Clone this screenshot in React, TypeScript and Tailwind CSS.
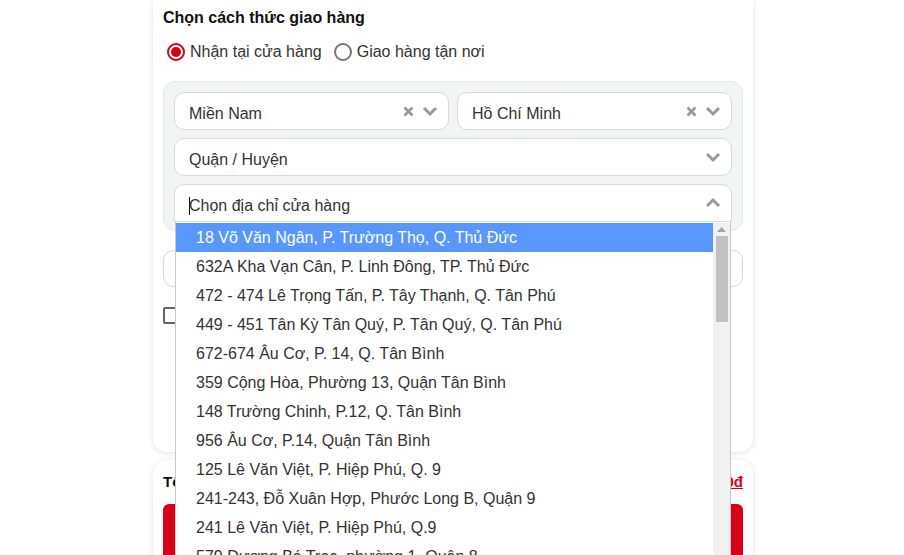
import React from 'react';

const stores = [
  '18 Võ Văn Ngân, P. Trường Thọ, Q. Thủ Đức',
  '632A Kha Vạn Cân, P. Linh Đông, TP. Thủ Đức',
  '472 - 474 Lê Trọng Tấn, P. Tây Thạnh, Q. Tân Phú',
  '449 - 451 Tân Kỳ Tân Quý, P. Tân Quý, Q. Tân Phú',
  '672-674 Âu Cơ, P. 14, Q. Tân Bình',
  '359 Cộng Hòa, Phường 13, Quận Tân Bình',
  '148 Trường Chinh, P.12, Q. Tân Bình',
  '956 Âu Cơ, P.14, Quận Tân Bình',
  '125 Lê Văn Việt, P. Hiệp Phú, Q. 9',
  '241-243, Đỗ Xuân Hợp, Phước Long B, Quận 9',
  '241 Lê Văn Việt, P. Hiệp Phú, Q.9',
  '579 Dương Bá Trạc, phường 1, Quận 8',
];

const Chevron = ({ up = false }: { up?: boolean }) => (
  <svg width="16" height="12" viewBox="0 0 16 12" className="text-[#999]">
    <polyline
      points={up ? '2,9 8,3 14,9' : '2,3 8,9 14,3'}
      fill="none"
      stroke="currentColor"
      strokeWidth="3"
      strokeLinejoin="miter"
    />
  </svg>
);

const Clear = () => (
  <svg width="11" height="11" viewBox="0 0 11 11" className="text-[#999]">
    <path d="M1.5 1.5 L9.5 9.5 M9.5 1.5 L1.5 9.5" stroke="currentColor" strokeWidth="2.6" />
  </svg>
);

const Select = ({ label, clearable = false }: { label: string; clearable?: boolean }) => (
  <div className="h-[38px] shrink-0 bg-white border border-[#d7d9dd] rounded-[10px] flex items-center pl-[14px] pr-[10px]">
    <span className="flex-1 pt-[5px] text-[16px] text-[#333]">{label}</span>
    {clearable && (
      <span className="mr-[8px] flex items-center">
        <Clear />
      </span>
    )}
    <Chevron />
  </div>
);

export default function App() {
  return (
    <div className="bg-white overflow-hidden h-[555px]">
      <div className="w-[600px] ml-[153px] flex flex-col gap-[8px] font-['Liberation_Sans',Arial,sans-serif] text-[#333]">
        {/* Delivery method card */}
        <div className="bg-white rounded-b-[14px] shadow-[0_1px_6px_rgba(0,0,0,0.12)] px-[10px] pt-[7px] h-[452px]">
          <h3 className="text-[16px] font-bold text-[#111] leading-[22px]">Chọn cách thức giao hàng</h3>
          <div className="flex items-center gap-[12px] mt-[11px] pl-[4px] text-[16px] text-[#333]">
            <label className="flex items-center gap-[5px]">
              <span className="w-[18px] h-[18px] rounded-full border-2 border-[#d70018] flex items-center justify-center">
                <span className="w-[10px] h-[10px] rounded-full bg-[#d70018]" />
              </span>
              Nhận tại cửa hàng
            </label>
            <label className="flex items-center gap-[5px]">
              <span className="w-[18px] h-[18px] rounded-full border-2 border-[#767676]" />
              Giao hàng tận nơi
            </label>
          </div>

          <div className="mt-[17px] bg-[#f3f4f6] border border-[#e7e8ea] rounded-[12px] px-[10px] pt-[10px] pb-[8px] flex flex-col gap-[8px]">
            <div className="grid grid-cols-2 gap-[8px]">
              <Select label="Miền Nam" clearable />
              <Select label="Hồ Chí Minh" clearable />
            </div>
            <Select label="Quận / Huyện" />
            <div className="relative">
              <div className="h-[38px] bg-white border border-[#d7d9dd] rounded-t-[10px] flex items-center pl-[14px] pr-[10px]">
                <span className="flex-1 pt-[5px] text-[16px] text-[#333] flex items-center">
                  <span className="w-px h-[18px] bg-[#111] mr-[-1px]" />
                  Chọn địa chỉ cửa hàng
                </span>
                <Chevron up />
              </div>
              {/* Dropdown */}
              <div className="absolute left-[1px] right-[1px] top-[38px] z-10 bg-white border border-[#c8c8c8] border-t-0 pt-[1px]">
                <div className="relative">
                  <ul className="mr-[17px]">
                    {stores.map((s, i) => (
                      <li
                        key={s}
                        className={`h-[29px] flex items-center pl-[20px] text-[16px] whitespace-nowrap ${
                          i === 0 ? 'bg-[#5897fb] text-white' : 'text-[#333]'
                        }`}
                      >
                        {s}
                      </li>
                    ))}
                  </ul>
                  <div className="absolute top-0 right-0 bottom-0 w-[17px] bg-[#f1f1f1] flex flex-col items-center">
                    <svg width="9" height="6" viewBox="0 0 9 6" className="mt-[4px]">
                      <polygon points="4.5,0 9,5 0,5" fill="#a3a3a3" />
                    </svg>
                    <div className="mt-[3px] w-[12px] h-[86px] bg-[#c1c1c1]" />
                  </div>
                </div>
              </div>
            </div>
          </div>

          <div className="mt-[19px] h-[37px] border border-[#d7d9dd] rounded-[10px]" />
          <label className="mt-[17px] flex items-center gap-[8px] text-[15px]">
            <span className="w-[17px] h-[17px] border-2 border-[#666] rounded-[2px]" />
            Xuất hóa đơn công ty
          </label>
        </div>

        {/* Total card */}
        <div className="bg-white rounded-t-[14px] shadow-[0_1px_6px_rgba(0,0,0,0.12)] px-[10px] pt-[11px] h-[120px]">
          <div className="flex items-center justify-between text-[15px]">
            <span className="font-bold text-[#111]">Tổng tiền tạm tính:</span>
            <span className="font-bold text-[#d70018] underline">0đ</span>
          </div>
          <div className="mt-[10px] h-[60px] rounded-[6px] bg-[#d70018]" />
        </div>
      </div>
    </div>
  );
}
